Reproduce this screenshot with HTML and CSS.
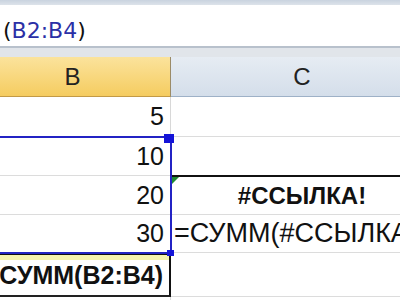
FILE: index.html
```html
<!DOCTYPE html>
<html>
<head>
    <title>СУММ — #ССЫЛКА!</title>
    <link rel="stylesheet" href="styles.css">
</head>
<body>
    <div class="window">
        <div class="top-band"></div>

        <!-- Строка формул -->
        <div class="formula-bar">
            <span class="paren">(</span><span class="ref">B2:B4</span><span class="paren">)</span>
        </div>
        <div class="bar-gap"></div>

        <!-- Лист -->
        <div class="sheet">
            <div class="col-head col-b active">B</div>
            <div class="col-head col-c">C</div>

            <div class="cell num">5</div>
            <div class="cell cell-c"></div>

            <div class="cell num">10</div>
            <div class="cell cell-c"></div>

            <div class="cell num">20</div>
            <div class="cell cell-c error-cell"><span class="error-mark"></span>#ССЫЛКА!</div>

            <div class="cell num">30</div>
            <div class="cell cell-c formula">=СУММ(#ССЫЛКА!)</div>

            <div class="cell edit-cell"><span>СУММ(B2:B4)</span></div>
            <div class="cell cell-c"></div>

            <div class="cell"></div>
            <div class="cell cell-c"></div>
        </div>

        <!-- Выделение диапазона B2:B4 -->
        <div class="range-box"></div>
        <div class="range-handle top"></div>
        <div class="range-handle bottom"></div>
    </div>
</body>
</html>
```

FILE: styles.css
```css
/* Общие стили */
* {
    box-sizing: border-box;
}
body {
    margin: 0;
    background: #ffffff;
    font-family: "Liberation Sans", Arial, sans-serif;
    color: #111111;
}
.window {
    position: relative;
    width: 400px;
    height: 300px;
    overflow: hidden;
}

/* Строка формул */
.top-band {
    height: 5px;
    background: linear-gradient(#c9d3df, #dde3ea);
}
.formula-bar {
    height: 41px;
    display: flex;
    align-items: center;
    padding: 10px 0 0 3px;
    background: #ffffff;
    font-family: "DejaVu Sans", sans-serif;
    font-size: 22px;
}
.formula-bar .paren {
    color: #111111;
}
.formula-bar .ref {
    color: #2b30a6;
}
.bar-gap {
    height: 11px;
    border-top: 2px solid #b8c1cc;
    background: #e1e5ea;
}

/* Сетка листа */
.sheet {
    display: grid;
    grid-template-columns: 196px 262px;
    grid-template-rows: 40px 40px 39px 39px 38px 44px 20px;
    margin-left: -25px;
}
.col-head {
    display: flex;
    align-items: center;
    justify-content: center;
    font-size: 24px;
    color: #222222;
    border-bottom: 1px solid #9eb1c7;
}
.col-b {
    border-right: 1px solid #9b8b68;
}
.col-head.active {
    background: linear-gradient(#fbe39c, #f5cc60);
    border-bottom-color: #c39a46;
}
.col-c {
    background: linear-gradient(#e6ecf3, #d4deea);
}
.cell {
    display: flex;
    align-items: center;
    font-size: 25px;
    border-bottom: 1px solid #dcdcdc;
    border-right: 1px solid #d8d8d8;
    white-space: nowrap;
    overflow: hidden;
}
.cell-c {
    border-right: none;
}
.num {
    justify-content: flex-end;
    padding-right: 6px;
}
.error-cell {
    position: relative;
    justify-content: center;
    font-weight: bold;
    font-size: 24px;
    border-top: 2px solid #111111;
    margin-top: -1px;
}
.error-mark {
    position: absolute;
    left: 0;
    top: 0;
    border-top: 8px solid #1e8a32;
    border-right: 8px solid transparent;
}
.formula {
    padding-left: 3px;
    font-size: 27px;
}

/* Ячейка в режиме редактирования */
.edit-cell {
    justify-content: flex-end;
    padding-right: 6px;
    font-weight: bold;
    font-size: 25px;
    border-top: 2px solid #111111;
    border-right: 2px solid #111111;
    border-bottom: 2px solid #222222;
    box-shadow: inset 0 5px 0 #f5f2ae;
}

/* Рамка выделения */
.range-box {
    position: absolute;
    left: -5px;
    top: 136px;
    width: 177px;
    height: 118px;
    border: 2px solid #2323c4;
}
.range-handle {
    position: absolute;
    background: #1414d8;
}
.range-handle.top {
    left: 164px;
    top: 134px;
    width: 10px;
    height: 9px;
}
.range-handle.bottom {
    left: 167px;
    top: 250px;
    width: 7px;
    height: 6px;
}
```
